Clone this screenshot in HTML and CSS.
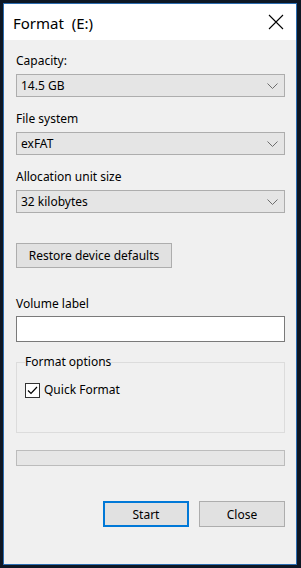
FILE: index.html
```html
<!DOCTYPE html>
<html lang="en">
<head>
<meta charset="utf-8">
<title>Format (E:)</title>
<link rel="stylesheet" href="styles.css">
</head>
<body>
<div class="window">
  <div class="titlebar">
    <span class="title">Format&nbsp; (E:)</span>
    <span class="close-x">
      <svg width="16" height="16" viewBox="0 0 16 16"><path d="M1 1 L15 15 M15 1 L1 15" stroke="#000" stroke-width="1.1" fill="none"/></svg>
    </span>
  </div>
  <div class="content">
    <div class="field first">
      <div class="label">Capacity:</div>
      <div class="select"><span>14.5 GB</span><svg class="chev" width="11" height="6" viewBox="0 0 11 6"><path d="M0.5 0.5 L5.5 5.5 L10.5 0.5" stroke="#6d6d6d" stroke-width="1" fill="none"/></svg></div>
    </div>
    <div class="field">
      <div class="label">File system</div>
      <div class="select"><span>exFAT</span><svg class="chev" width="11" height="6" viewBox="0 0 11 6"><path d="M0.5 0.5 L5.5 5.5 L10.5 0.5" stroke="#6d6d6d" stroke-width="1" fill="none"/></svg></div>
    </div>
    <div class="field">
      <div class="label">Allocation unit size</div>
      <div class="select"><span>32 kilobytes</span><svg class="chev" width="11" height="6" viewBox="0 0 11 6"><path d="M0.5 0.5 L5.5 5.5 L10.5 0.5" stroke="#6d6d6d" stroke-width="1" fill="none"/></svg></div>
    </div>
    <div class="restore-row">
      <button class="btn restore">Restore device defaults</button>
    </div>
    <div class="field volume">
      <div class="label">Volume label</div>
      <div class="textbox"></div>
    </div>
    <fieldset class="group">
      <legend>Format options</legend>
      <div class="check-row">
        <span class="checkbox"><svg width="13" height="13" viewBox="0 0 13 13"><path d="M2 6.5 L5 9.5 L11 3" stroke="#000" stroke-width="1.2" fill="none"/></svg></span>
        <span>Quick Format</span>
      </div>
    </fieldset>
    <div class="progress"></div>
    <div class="actions">
      <button class="btn default">Start</button>
      <button class="btn">Close</button>
    </div>
  </div>
</div>
</body>
</html>
```

FILE: styles.css
```css
* { box-sizing: border-box; }
html, body { margin: 0; padding: 0; }
body {
  width: 301px;
  height: 568px;
  background: #0e1724;
  padding: 3px 4px 3px 3px;
  font-family: "Noto Sans", "Open Sans", sans-serif;
  font-size: 12px;
  color: #000;
}
.window {
  width: 294px;
  height: 562px;
  border: 1px solid #2b6cb0;
  background: #f0f0f0;
  display: flex;
  flex-direction: column;
}
.titlebar {
  height: 36px;
  background: #fff;
  display: flex;
  align-items: center;
  justify-content: space-between;
  padding: 0 12px 0 9px;
}
.title {
  font-size: 15px;
  line-height: 20px;
  padding-top: 1px;
}
.close-x { display: flex; width: 16px; height: 16px; }
.content {
  flex: 1;
  display: flex;
  flex-direction: column;
  padding: 13px 11px 0 12px;
}
.field { display: flex; flex-direction: column; }
.field + .field { margin-top: 14px; }
.label { line-height: 16px; margin-bottom: 5px; }
.select {
  height: 23px;
  border: 1px solid #adadad;
  background: #e5e5e5;
  display: flex;
  align-items: center;
  justify-content: space-between;
  padding: 0 6px 0 4px;
  line-height: 16px;
}
.chev { display: block; }
.restore-row { margin-top: 30px; display: flex; }
.btn {
  font-family: inherit;
  font-size: 12px;
  color: #000;
  background: #e1e1e1;
  border: 1px solid #adadad;
  border-radius: 0;
  height: 26px;
  padding: 0;
  margin: 0;
}
.restore { width: 156px; height: 25px; }
.volume { margin-top: 28px; }
.volume .label { margin-bottom: 4px; }
.textbox {
  height: 26px;
  background: #fff;
  border: 1px solid #7a7a7a;
}
.group {
  margin: 12px 0 0 0;
  padding: 12px 8px 0 8px;
  height: 79px;
  border: 1px solid #dcdcdc;
  min-width: 0;
}
.group legend {
  padding: 0;
  line-height: 16px;
}
.check-row {
  display: flex;
  align-items: center;
  gap: 4px;
  line-height: 16px;
}
.checkbox {
  width: 15px;
  height: 15px;
  border: 1px solid #333;
  background: #fff;
  display: flex;
  align-items: center;
  justify-content: center;
}
.checkbox svg { display: block; }
.progress {
  margin-top: 17px;
  height: 16px;
  border: 1px solid #bcbcbc;
  background: #e6e6e6;
}
.actions {
  margin-top: 35px;
  display: flex;
  justify-content: flex-end;
  gap: 10px;
}
.actions .btn { width: 86px; height: 26px; }
.actions .btn.default {
  border: 2px solid #0078d7;
  width: 86px;
}
```
